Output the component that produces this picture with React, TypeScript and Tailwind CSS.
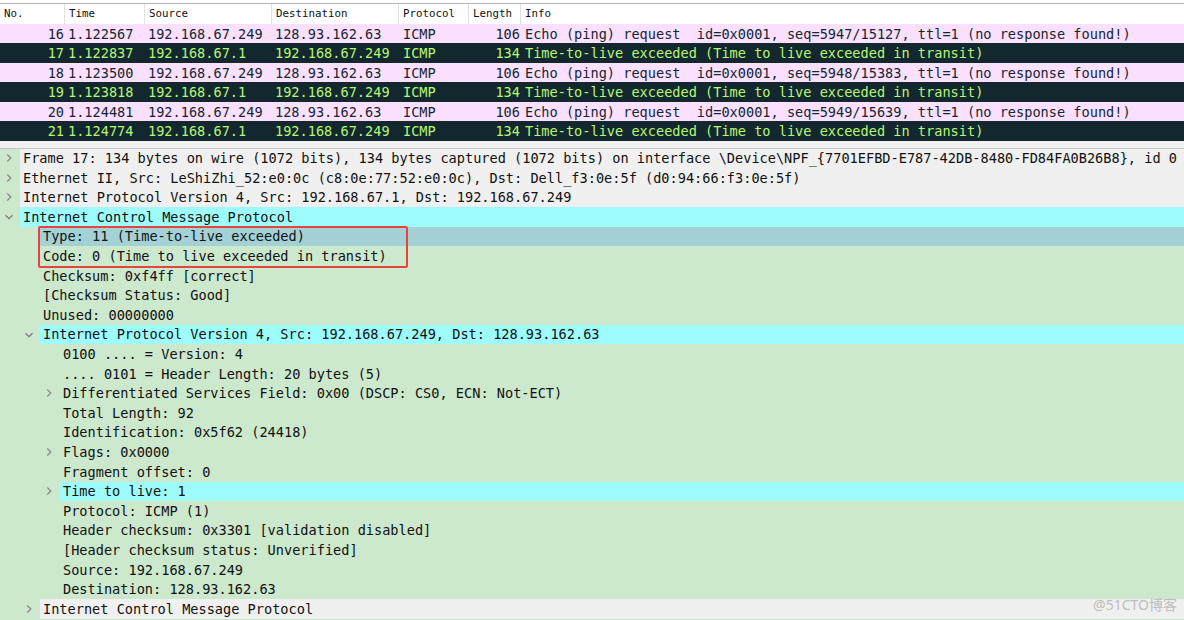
import React from "react";

const mono = "font-['DejaVu_Sans_Mono','Liberation_Mono',monospace]";

type Pkt = { no: number; time: string; src: string; dst: string; len: number; info: string; err: boolean };

const packets: Pkt[] = [
  { no: 16, time: "1.122567", src: "192.168.67.249", dst: "128.93.162.63", len: 106, info: "Echo (ping) request  id=0x0001, seq=5947/15127, ttl=1 (no response found!)", err: false },
  { no: 17, time: "1.122837", src: "192.168.67.1", dst: "192.168.67.249", len: 134, info: "Time-to-live exceeded (Time to live exceeded in transit)", err: true },
  { no: 18, time: "1.123500", src: "192.168.67.249", dst: "128.93.162.63", len: 106, info: "Echo (ping) request  id=0x0001, seq=5948/15383, ttl=1 (no response found!)", err: false },
  { no: 19, time: "1.123818", src: "192.168.67.1", dst: "192.168.67.249", len: 134, info: "Time-to-live exceeded (Time to live exceeded in transit)", err: true },
  { no: 20, time: "1.124481", src: "192.168.67.249", dst: "128.93.162.63", len: 106, info: "Echo (ping) request  id=0x0001, seq=5949/15639, ttl=1 (no response found!)", err: false },
  { no: 21, time: "1.124774", src: "192.168.67.1", dst: "192.168.67.249", len: 134, info: "Time-to-live exceeded (Time to live exceeded in transit)", err: true },
];

const cols = "grid grid-cols-[64px_80px_127px_127px_70px_52px_1fr]";

function Chevron({ open }: { open?: boolean }) {
  return open ? (
    <svg width="10" height="10" viewBox="0 0 10 10" className="block">
      <path d="M1.5 3.2 L5 6.7 L8.5 3.2" fill="none" stroke="#7a7a7a" strokeWidth="1.3" />
    </svg>
  ) : (
    <svg width="10" height="10" viewBox="0 0 10 10" className="block">
      <path d="M3.3 1.5 L6.8 5 L3.3 8.5" fill="none" stroke="#8a8a8a" strokeWidth="1.3" />
    </svg>
  );
}

type Node = { text: string; level: number; arrow?: "open" | "closed"; bg?: string };

function TreeRow({ text, level, arrow, bg = "" }: Node) {
  const pad = ["w-[20px]", "w-[40px]", "w-[60px]"][level];
  return (
    <div className="flex h-[19.6px] items-center">
      <div className={`${pad} shrink-0 flex justify-end pr-[6px]`}>
        {arrow && <Chevron open={arrow === "open"} />}
      </div>
      <div className={`flex-1 h-full flex items-center pl-[3px] whitespace-pre text-[#111] ${bg}`}>{text}</div>
    </div>
  );
}

const gray = "bg-[#f0f0f0]";
const cyan = "bg-[#9ffcfd]";

export default function App() {
  const before: Node[] = [
    { text: "Frame 17: 134 bytes on wire (1072 bits), 134 bytes captured (1072 bits) on interface \\Device\\NPF_{7701EFBD-E787-42DB-8480-FD84FA0B26B8}, id 0", level: 0, arrow: "closed", bg: gray },
    { text: "Ethernet II, Src: LeShiZhi_52:e0:0c (c8:0e:77:52:e0:0c), Dst: Dell_f3:0e:5f (d0:94:66:f3:0e:5f)", level: 0, arrow: "closed", bg: gray },
    { text: "Internet Protocol Version 4, Src: 192.168.67.1, Dst: 192.168.67.249", level: 0, arrow: "closed", bg: gray },
    { text: "Internet Control Message Protocol", level: 0, arrow: "open", bg: cyan },
  ];
  const after: Node[] = [
    { text: "Checksum: 0xf4ff [correct]", level: 1 },
    { text: "[Checksum Status: Good]", level: 1 },
    { text: "Unused: 00000000", level: 1 },
    { text: "Internet Protocol Version 4, Src: 192.168.67.249, Dst: 128.93.162.63", level: 1, arrow: "open", bg: cyan },
    { text: "0100 .... = Version: 4", level: 2 },
    { text: ".... 0101 = Header Length: 20 bytes (5)", level: 2 },
    { text: "Differentiated Services Field: 0x00 (DSCP: CS0, ECN: Not-ECT)", level: 2, arrow: "closed" },
    { text: "Total Length: 92", level: 2 },
    { text: "Identification: 0x5f62 (24418)", level: 2 },
    { text: "Flags: 0x0000", level: 2, arrow: "closed" },
    { text: "Fragment offset: 0", level: 2 },
    { text: "Time to live: 1", level: 2, arrow: "closed", bg: cyan },
    { text: "Protocol: ICMP (1)", level: 2 },
    { text: "Header checksum: 0x3301 [validation disabled]", level: 2 },
    { text: "[Header checksum status: Unverified]", level: 2 },
    { text: "Source: 192.168.67.249", level: 2 },
    { text: "Destination: 128.93.162.63", level: 2 },
    { text: "Internet Control Message Protocol", level: 1, arrow: "closed", bg: gray },
  ];

  return (
    <div className={`relative w-[1184px] h-[620px] overflow-hidden bg-white ${mono}`}>
      {/* packet list */}
      <div className="pt-[3px]">
        <div className={`${cols} h-[20.5px] border-t border-[#b4b4b4] bg-white text-[10.8px] text-[#111] items-stretch`}>
          {["No.", "Time", "Source", "Destination", "Protocol", "Length", "Info"].map((h, i) => (
            <div key={h} className={`flex items-center pl-[4px] ${i > 0 ? "border-l border-[#e2e2e2]" : ""}`}>{h}</div>
          ))}
        </div>
        {packets.map((p) => (
          <div
            key={p.no}
            className={`${cols} h-[19.5px] items-center text-[13.6px] whitespace-pre ${p.err ? "bg-[#12272e] text-[#b7f774]" : "bg-[#fce0ff] text-[#12272e]"}`}
          >
            <div className="text-right">{p.no}</div>
            <div className="pl-[4px]">{p.time}</div>
            <div className="pl-[4px]">{p.src}</div>
            <div className="pl-[4px]">{p.dst}</div>
            <div className="pl-[5px]">ICMP</div>
            <div className="text-right">{p.len}</div>
            <div className="pl-[5px] overflow-hidden">{p.info}</div>
          </div>
        ))}
      </div>

      {/* splitter */}
      <div className="h-[8px] bg-[#f0f0f0] border-b border-[#c4c4c4]" />

      {/* packet details */}
      <div className="bg-[#cce8cd] text-[13.6px] h-[480px]">
        {before.map((n, i) => (
          <TreeRow key={i} {...n} />
        ))}
        <div className="relative">
          <TreeRow text="Type: 11 (Time-to-live exceeded)" level={1} bg="bg-[#a3d1d6]" />
          <TreeRow text="Code: 0 (Time to live exceeded in transit)" level={1} />
          <div className="absolute left-[38px] w-[370px] top-[-1px] bottom-[-2px] border-2 border-[#e5443f] rounded-[2px]" />
        </div>
        {after.map((n, i) => (
          <TreeRow key={i} {...n} />
        ))}
      </div>

      <div className="absolute right-[7px] bottom-[5px] text-[14px] text-[#bdbdbd] font-['Noto_Sans','Noto_Sans_CJK_SC',sans-serif]">
        @51CTO博客
      </div>
    </div>
  );
}
